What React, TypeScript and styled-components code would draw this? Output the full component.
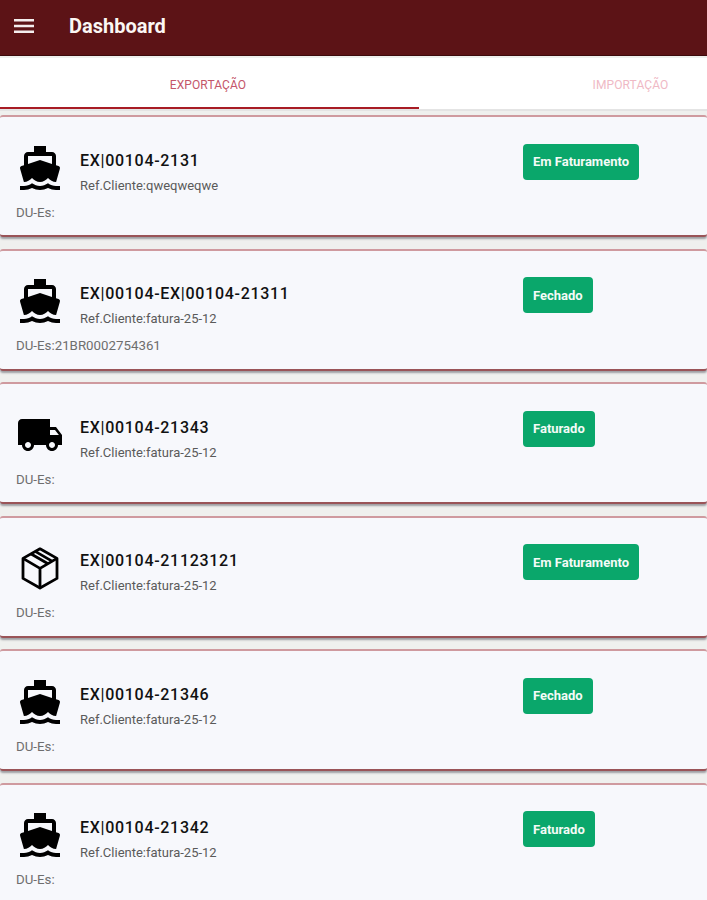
import React from "react";
import styled, { createGlobalStyle } from "styled-components";

const GlobalStyle = createGlobalStyle`
  html, body {
    margin: 0;
    padding: 0;
    height: 900px;
    overflow: hidden;
    background: #eff0ee;
    font-family: Roboto, "Liberation Sans", sans-serif;
  }
`;

const Page = styled.div`
  width: 707px;
  height: 900px;
  overflow: hidden;
`;

const Header = styled.header`
  height: 56px;
  background: #5c1316;
  border-bottom: 1px solid #3d0a0c;
  box-sizing: border-box;
  display: flex;
  align-items: center;
  padding: 0 14px 3px;
  gap: 35px;
  margin-bottom: 2px;
`;

const MenuIcon = styled.svg`
  width: 20px;
  height: 16px;
  fill: #f4eeee;
  flex: none;
`;

const Title = styled.h1`
  margin: 0;
  font-size: 20px;
  font-weight: 700;
  color: #fbf7f4;
`;

const Tabs = styled.nav`
  display: flex;
  height: 53px;
  background: #fff;
  border-bottom: 2px solid #e4e4e4;
  box-sizing: border-box;
  overflow: hidden;
`;

const Tab = styled.div<{ $active?: boolean }>`
  flex: 0 0 ${(p) => (p.$active ? "419px" : "423px")};
  box-sizing: border-box;
  height: 51px;
  padding: 4px ${(p) => (p.$active ? "3px" : "0")} 0 0;
  display: flex;
  align-items: center;
  justify-content: center;
  font-size: 12px;
  letter-spacing: 0.1px;
  color: ${(p) => (p.$active ? "#c4566a" : "#efb9c5")};
  border-bottom: 2px solid ${(p) => (p.$active ? "#a81c24" : "transparent")};
`;

const List = styled.main`
  display: flex;
  flex-direction: column;
  gap: 11.6px;
  padding-top: 4px;
`;

const Card = styled.article`
  height: 122px;
  box-sizing: border-box;
  background: #f7f8fc;
  border-top: 2px solid #cf9a9f;
  border-bottom: 2px solid #9a5458;
  border-radius: 3px;
  box-shadow: 0 2px 2px rgba(60, 60, 70, 0.45);
  padding: 26.500px 0 0 16px;
`;

const Row = styled.div`
  display: flex;
  align-items: flex-start;
`;

const IconBox = styled.svg`
  width: 48px;
  height: 48px;
  flex: none;
  fill: #000;
`;

const Info = styled.div`
  width: 459px;
  padding: 7px 0 0 16px;
  box-sizing: border-box;
`;

const Code = styled.div`
  font-size: 16px;
  font-weight: 500;
  line-height: 20px;
  letter-spacing: 0.7px;
  color: #111;
`;

const Reference = styled.div`
  margin-top: 8px;
  font-size: 13px;
  line-height: 14px;
  color: #5a5a5a;
`;

const Status = styled.div`
  height: 36px;
  padding: 0 10px;
  border-radius: 4px;
  background: #0aa76b;
  color: #f4fbf7;
  font-size: 13px;
  font-weight: 700;
  display: flex;
  align-items: center;
`;

const DueList = styled.div`
  margin-top: 13px;
  font-size: 13.3px;
  line-height: 14px;
  color: #6e6e6e;
`;

type Kind = "boat" | "truck" | "box";

const ICONS: Record<Kind, React.ReactNode> = {
  boat: (
    <path d="M20 21c-1.39 0-2.78-.47-4-1.32-2.44 1.71-5.56 1.71-8 0C6.78 20.53 5.39 21 4 21H2v2h2c1.38 0 2.74-.35 4-.99 2.52 1.29 5.48 1.29 8 0 1.26.65 2.62.99 4 .99h2v-2h-2zM3.95 19H4c1.6 0 3.02-.88 4-2 .98 1.12 2.4 2 4 2s3.02-.88 4-2c.98 1.12 2.4 2 4 2h.05l1.89-6.68c.08-.26.06-.54-.06-.78s-.34-.42-.6-.5L20 10.62V6c0-1.1-.9-2-2-2h-3V1H9v3H6c-1.1 0-2 .9-2 2v4.62l-1.29.42c-.26.08-.48.26-.6.5s-.15.52-.06.78L3.95 19zM6 6h12v3.97L12 8 6 9.97V6z" />
  ),
  truck: (
    <path d="M20 8h-3V4H3c-1.1 0-2 .9-2 2v11h2c0 1.66 1.34 3 3 3s3-1.34 3-3h6c0 1.66 1.34 3 3 3s3-1.34 3-3h2v-5l-3-4zM6 18.5c-.83 0-1.5-.67-1.5-1.5s.67-1.5 1.5-1.5 1.5.67 1.5 1.5-.67 1.5-1.5 1.5zm13.5-9l1.96 2.5H17V9.5h2.5zm-1.5 9c-.83 0-1.5-.67-1.5-1.5s.67-1.5 1.5-1.5 1.5.67 1.5 1.5-.67 1.500-1.500 1.500z" />
  ),
  box: (
    <g fill="none" stroke="#000" strokeWidth="1.4" strokeLinejoin="round">
      <path d="M12 2.400l8.500 4.800v10L12 22l-8.500-4.800v-10z" />
      <path d="M3.500 7.200L12 12.200l8.500-5M12 12.200V22" />
      <path d="M7.400 4.900l8.600 5M9.600 3.700l8.600 5" />
    </g>
  ),
};

const SHIPMENTS: {
  kind: Kind;
  code: string;
  ref: string;
  due: string;
  status: string;
}[] = [
  { kind: "boat", code: "EX|00104-2131", ref: "qweqweqwe", due: "", status: "Em Faturamento" },
  { kind: "boat", code: "EX|00104-EX|00104-21311", ref: "fatura-25-12", due: "21BR0002754361", status: "Fechado" },
  { kind: "truck", code: "EX|00104-21343", ref: "fatura-25-12", due: "", status: "Faturado" },
  { kind: "box", code: "EX|00104-21123121", ref: "fatura-25-12", due: "", status: "Em Faturamento" },
  { kind: "boat", code: "EX|00104-21346", ref: "fatura-25-12", due: "", status: "Fechado" },
  { kind: "boat", code: "EX|00104-21342", ref: "fatura-25-12", due: "", status: "Faturado" },
];

const App: React.FC = () => {
  return (
    <Page>
      <GlobalStyle />
      <Header>
        <MenuIcon viewBox="0 0 20 16">
          <path d="M0 1h20v2.400H0zM0 6.800h20v2.400H0zM0 12.600h20V15H0z" />
        </MenuIcon>
        <Title>Dashboard</Title>
      </Header>
      <Tabs>
        <Tab $active>EXPORTAÇÃO</Tab>
        <Tab>IMPORTAÇÃO</Tab>
      </Tabs>
      <List>
        {SHIPMENTS.map((s) => (
          <Card key={s.code}>
            <Row>
              <IconBox viewBox="0 0 24 24">{ICONS[s.kind]}</IconBox>
              <Info>
                <Code>{s.code}</Code>
                <Reference>Ref.Cliente:{s.ref}</Reference>
              </Info>
              <Status>{s.status}</Status>
            </Row>
            <DueList>DU-Es:{s.due}</DueList>
          </Card>
        ))}
      </List>
    </Page>
  );
};

export default App;
